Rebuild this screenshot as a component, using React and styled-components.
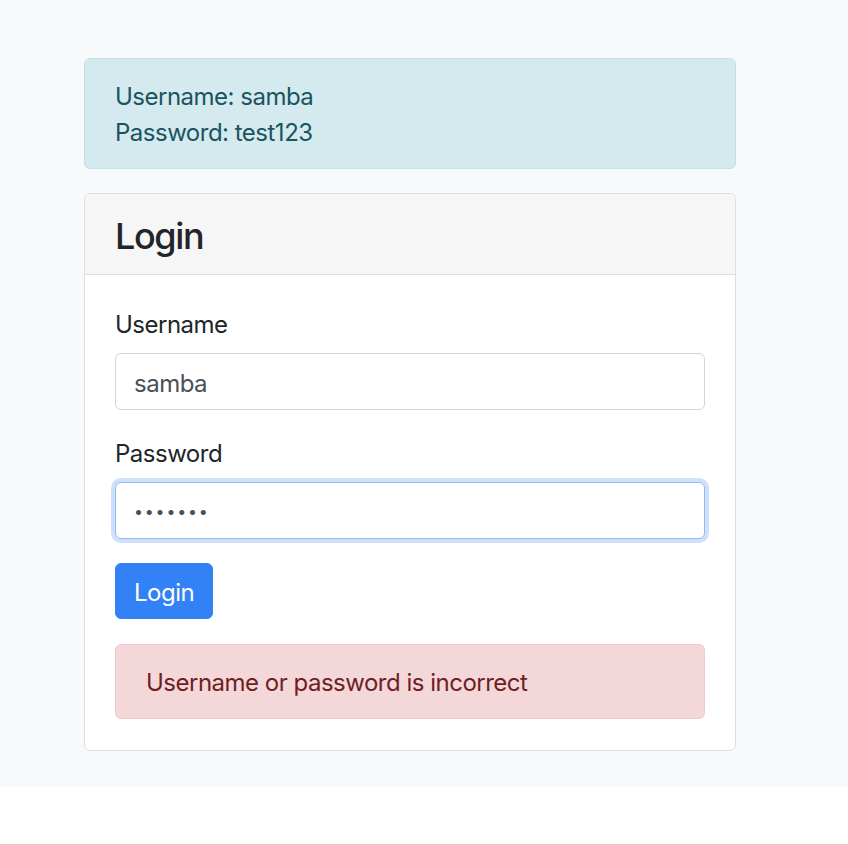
import styled, { createGlobalStyle } from "styled-components";

const GlobalStyle = createGlobalStyle`
  body {
    margin: 0;
    background: #ffffff;
    font-family: Inter, "Noto Sans", "Liberation Sans", sans-serif;
    font-size: 24px;
    line-height: 1.5;
    letter-spacing: -0.5px;
    color: #212529;
  }
  * {
    box-sizing: border-box;
  }
`;

const Page = styled.div`
  background: #f8f9fa;
  padding: 58px 112px 36px 84px;
`;

const Alert = styled.div`
  padding: 20px 30px 17px;
  border: 1px solid ${(p) => (p.$variant === "danger" ? "#f3c8cc" : "#c1e2e9")};
  border-radius: 6px;
  background: ${(p) => (p.$variant === "danger" ? "#f3d7d9" : "#d5eaef")};
  color: ${(p) => (p.$variant === "danger" ? "#6f1e24" : "#1a5460")};
  margin-bottom: ${(p) => (p.$variant === "danger" ? "0" : "24px")};
  margin-top: ${(p) => (p.$variant === "danger" ? "25px" : "0")};
`;

const Card = styled.div`
  background: #fff;
  border: 1px solid #dfdfdf;
  border-radius: 6px;
  overflow: hidden;
`;

const CardHeader = styled.div`
  background: #f6f6f6;
  border-bottom: 1px solid #dfdfdf;
  padding: 20px 30px 16px;

  h4 {
    margin: 0;
    font-size: 36px;
    font-weight: 500;
    line-height: 44px;
    letter-spacing: -1.4px;
    color: #212529;
  }
`;

const CardBody = styled.div`
  padding: 30px 30px 31px;
`;

const FormGroup = styled.div`
  margin-bottom: 24px;
`;

const Label = styled.label`
  display: block;
  padding-top: 2px;
  margin-bottom: 10px;
  color: #212529;
`;

const Input = styled.input`
  display: block;
  width: 100%;
  height: 57px;
  padding: ${(p) => (p.type === "password" ? "9px 18px" : "11px 18px 7px")};
  font-family: inherit;
  font-size: ${(p) => (p.type === "password" ? "16px" : "24px")};
  letter-spacing: ${(p) => (p.type === "password" ? "1.8px" : "-0.5px")};
  line-height: 1.5;
  color: #495057;
  background: #fff;
  border: 1px solid ${(p) => (p.$focused ? "#8fbaf8" : "#d3d6d9")};
  border-radius: 6px;
  outline: none;
  box-shadow: ${(p) => (p.$focused ? "0 0 0 4px #cfe0fb" : "none")};
`;

const Button = styled.button`
  display: inline-block;
  padding: 11px 18px 7px;
  font-family: inherit;
  font-size: 24px;
  letter-spacing: -0.5px;
  line-height: 1.5;
  color: #fff;
  background: #3381f6;
  border: 1px solid #3381f6;
  border-radius: 6px;
  cursor: pointer;
`;

const App = () => {
  return (
    <>
      <GlobalStyle />
      <Page>
        <Alert $variant="info">
          Username: samba
          <br />
          Password: test123
        </Alert>
        <Card>
          <CardHeader>
            <h4>Login</h4>
          </CardHeader>
          <CardBody>
            <FormGroup>
              <Label>Username</Label>
              <Input type="text" value="samba" readOnly />
            </FormGroup>
            <FormGroup>
              <Label>Password</Label>
              <Input type="password" value="test123" readOnly $focused />
            </FormGroup>
            <Button>Login</Button>
            <Alert $variant="danger">Username or password is incorrect</Alert>
          </CardBody>
        </Card>
      </Page>
    </>
  );
};

export default App;
